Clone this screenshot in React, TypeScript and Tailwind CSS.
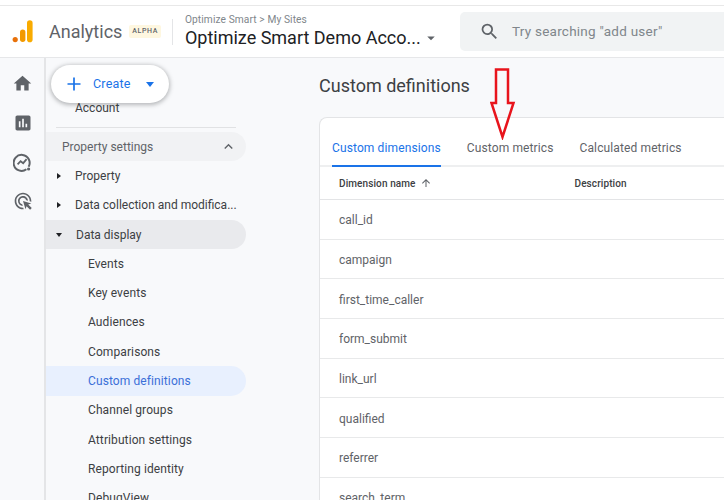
import { MdAdsClick, MdArrowDropDown, MdArrowUpward, MdAssessment, MdExpandLess, MdHome, MdSearch } from "react-icons/md";

const tabs = ["Custom dimensions", "Custom metrics", "Calculated metrics"];
const rows = ["call_id", "campaign", "first_time_caller", "form_submit", "link_url", "qualified", "referrer", "search_term"];
const subItems = ["Events", "Key events", "Audiences", "Comparisons", "Custom definitions", "Channel groups", "Attribution settings", "Reporting identity", "DebugView"];

function AnalyticsLogo() {
  return (
    <svg width="22" height="24" viewBox="0 0 22 24">
      <circle cx="3.2" cy="19.6" r="2.6" fill="#e8710a" />
      <rect x="8" y="9.4" width="5.4" height="12.6" rx="2.7" fill="#f29900" />
      <rect x="15" y="0.2" width="5.6" height="22" rx="2.8" fill="#f9ab00" />
    </svg>
  );
}

function ExploreIcon() {
  return (
    <svg width="19" height="19" viewBox="0 0 19 19" fill="none" stroke="#5f6368" strokeWidth="2">
      <path d="M15.6 13.8A8 8 0 1 0 13.4 16.3" />
      <path d="M4.6 11.4l3-3.2 2.6 2 3.4-4" strokeWidth="1.8" />
      <circle cx="15.6" cy="16" r="1.6" fill="#5f6368" stroke="none" />
    </svg>
  );
}

function RedArrow() {
  return (
    <svg width="26" height="72" viewBox="0 0 26 72" fill="none" stroke="#e8141c" strokeWidth="2.5">
      <path d="M6 1.500h12v33.500h5.500L12.500 69 1.500 35H6z" />
    </svg>
  );
}

function TreeRow({ label, open, active }: { label: string; open?: boolean; active?: boolean }) {
  return (
    <div className={`flex h-[29.3px] items-center rounded-r-full pl-[11px] text-[12px] text-[#3c4043] ${active ? "bg-[#e9eaed]" : ""}`}>
      <span className={`mr-[14px] h-0 w-0 border-transparent ${open ? "ml-[-1px] border-x-[3.5px] border-t-[4px] border-t-[#202124]" : "border-y-[3.5px] border-l-[4px] border-l-[#202124]"}`} />
      <span className="whitespace-nowrap">{label}</span>
    </div>
  );
}

export default function App() {
  return (
    <div className="flex h-[500px] w-[724px] flex-col overflow-hidden bg-[#f8f9fb] font-['Roboto',sans-serif]">
      <div className="h-[6px] shrink-0 border-b border-[#e8e8e8] bg-white" />

      <header className="flex h-[52px] shrink-0 items-center border-b border-[#e6e7e9] bg-white">
        <div className="ml-[12px] mr-[15px]">
          <AnalyticsLogo />
        </div>
        <span className="text-[18px] text-[#5f6368]">Analytics</span>
        <span className="ml-[7px] rounded-[2px] bg-[#fef7e0] px-[3px] py-[2px] text-[7px] font-medium leading-[9px] tracking-[0.6px] text-[#5f6368]">ALPHA</span>
        <div className="ml-[11px] mr-[12px] h-[26px] w-px bg-[#e4e5e7]" />
        <div className="w-[258px]">
          <div className="whitespace-nowrap text-[10.2px] leading-[12px] tracking-[0.1px] text-[#80868b]">Optimize Smart &gt; My Sites</div>
          <div className="flex items-center whitespace-nowrap text-[18px] leading-[24px] text-[#202124]">
            <span>Optimize Smart Demo Acco...</span>
            <MdArrowDropDown className="ml-[1px] text-[18px] text-[#5f6368]" />
          </div>
        </div>
        <div className="ml-[17px] flex h-[39px] flex-1 items-center rounded-l-[5px] bg-[#f1f3f4] pl-[19px]">
          <MdSearch className="text-[21px] text-[#5f6368]" />
          <span className="ml-[12px] whitespace-nowrap text-[13.5px] tracking-[0.25px] text-[#80868b]">Try searching "add user"</span>
        </div>
      </header>

      <div className="relative flex min-h-0 flex-1">
        <nav className="flex w-[46px] shrink-0 flex-col items-center gap-[19.400px] border-r-2 border-[#e4e5e7] pl-[1px] pt-[15px]">
          <MdHome className="text-[21px] text-[#5f6368]" />
          <MdAssessment className="text-[20px] text-[#5f6368]" />
          <ExploreIcon />
          <MdAdsClick className="text-[20px] text-[#5f6368]" />
        </nav>

        <aside className="w-[200px] shrink-0 overflow-hidden pt-[43px]">
          <div className="pl-[29px] text-[12px] leading-[15px] text-[#3c4043]">Account</div>
          <div className="ml-[10px] mt-[11px] h-px w-[180px] bg-[#e1e2e4]" />
          <div className="mt-[4px] flex h-[29.3px] items-center justify-between rounded-r-full bg-[#f1f2f4] pl-[16px] pr-[9px] text-[12px] text-[#5f6368]">
            <span>Property settings</span>
            <MdExpandLess className="text-[17px] text-[#5f6368]" />
          </div>
          <TreeRow label="Property" />
          <TreeRow label="Data collection and modifica..." />
          <TreeRow label="Data display" open active />
          {subItems.map((item) => (
            <div
              key={item}
              className={`flex h-[29.3px] items-center rounded-r-full pl-[42px] text-[12px] tracking-[0.1px] ${item === "Custom definitions" ? "bg-[#e8f0fe] text-[#3b6fd8]" : "text-[#3c4043]"}`}
            >
              {item}
            </div>
          ))}
        </aside>

        <button className="absolute left-[51px] top-[7px] flex h-[38px] w-[118px] items-center rounded-full bg-white pl-[15px] text-[12.5px] tracking-[0.2px] text-[#1a73e8] shadow-[0_1px_4px_1px_rgba(60,64,67,0.35)]">
          <svg width="16" height="16" viewBox="0 0 16 16" fill="none" stroke="#1a73e8" strokeWidth="1.7">
            <path d="M8 1.500v13M1.500 8h13" />
          </svg>
          <span className="ml-[11px]">Create</span>
          <span className="ml-[15px] h-0 w-0 border-x-[4px] border-t-[5px] border-x-transparent border-t-[#1a73e8]" />
        </button>

        <main className="min-w-0 flex-1 pl-[73px]">
          <h1 className="mt-[15px] text-[18px] leading-[26px] text-[#3c4043]">Custom definitions</h1>
          <section className="mt-[18px] w-[420px] rounded-tl-[8px] border border-r-0 border-[#e3e4e6] bg-white">
            <div className="flex h-[49px] items-end gap-[26px] border-b-2 border-[#eeeff0] pl-[12px]">
              {tabs.map((tab, i) => (
                <div key={tab} className={`-mb-[2px] h-[33px] whitespace-nowrap border-b-2 pt-[7px] text-[12px] leading-[15px] tracking-[0.12px] ${i === 0 ? "border-[#1a73e8] text-[#1a73e8]" : "border-transparent text-[#5f6368]"}`}>
                  {tab}
                </div>
              ))}
            </div>
            <div className="flex h-[33px] items-center border-b border-[#e3e4e6] text-[10px] font-medium tracking-[0.1px] text-[#3c4043]">
              <div className="flex w-[254.500px] items-center pl-[19px]">
                Dimension name
                <MdArrowUpward className="ml-[4px] text-[12px] text-[#5f6368]" />
              </div>
              <div>Description</div>
            </div>
            {rows.map((row) => (
              <div key={row} className="flex h-[39.700px] items-center border-b border-[#e8e9ea] pl-[19px] pt-[2px] text-[12px] text-[#5f6368]">
                {row}
              </div>
            ))}
          </section>
        </main>

        <div className="absolute left-[490px] top-[10px]">
          <RedArrow />
        </div>
      </div>
    </div>
  );
}
